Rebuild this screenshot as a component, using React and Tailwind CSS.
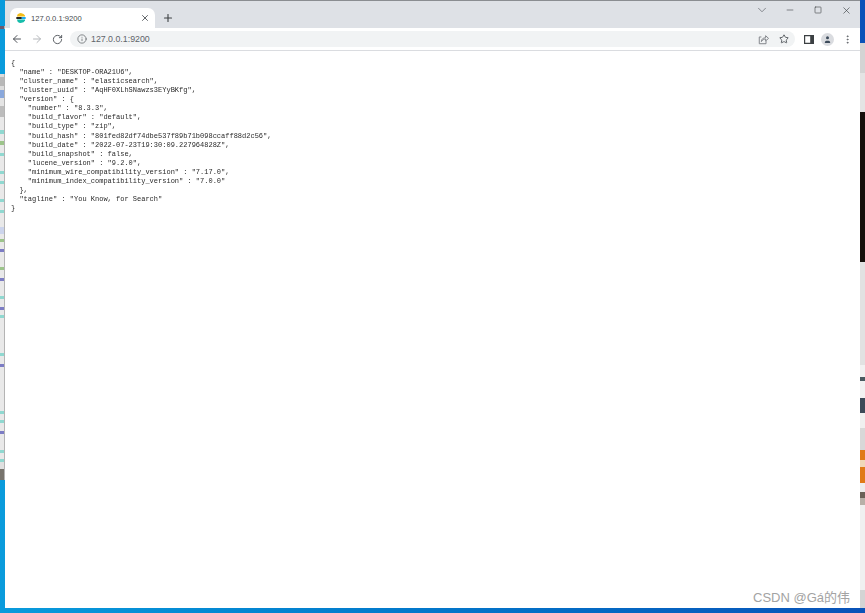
import { ArrowLeft, ArrowRight, RotateCw, Info, Plus, X, ChevronDown, Minus, Square, Star, EllipsisVertical, User } from "lucide-react";

const json = `{
  "name" : "DESKTOP-ORA21U6",
  "cluster_name" : "elasticsearch",
  "cluster_uuid" : "AqHF0XLhSNawzs3EYyBKfg",
  "version" : {
    "number" : "8.3.3",
    "build_flavor" : "default",
    "build_type" : "zip",
    "build_hash" : "801fed82df74dbe537f89b71b098ccaff88d2c56",
    "build_date" : "2022-07-23T19:30:09.227964828Z",
    "build_snapshot" : false,
    "lucene_version" : "9.2.0",
    "minimum_wire_compatibility_version" : "7.17.0",
    "minimum_index_compatibility_version" : "7.0.0"
  },
  "tagline" : "You Know, for Search"
}`;

const paper = "#e9e9e9";
const teal = "#8fd8d0";
const green = "#9cc48a";
const navy = "#7c7cc4";

// slices of the windows behind the browser: [height, colour]
const leftBits = [
  [26, "transparent"], [3, "#6a5a70"], [45, "transparent"],
  [3, "#dcdcdc"], [9, "#b8b8b8"], [4, "#dddddd"], [8, "#8aa8dc"], [8, "#e4e4e4"], [11, "#bcbcbc"],
  [13, paper], [4, teal], [7, paper], [4, green], [8, paper], [3, teal], [15, paper],
  [3, teal], [7, paper], [3, teal], [15, paper], [3, teal], [8, paper], [3, teal], [14, paper],
  [7, "#ccd4ec"], [5, paper], [3, green], [7, paper], [3, navy], [15, paper], [3, green], [8, paper],
  [3, navy], [15, paper], [3, teal], [8, paper], [3, navy], [5, paper], [3, teal], [35, paper],
  [3, teal], [8, paper], [3, navy], [44, paper], [3, teal], [6, paper], [3, teal], [8, paper],
  [3, navy], [16, paper], [3, teal], [6, paper], [3, teal], [7, "#e0e0e0"], [11, "#77736c"],
  [128, "transparent"],
];

const rightBits = [
  [43, "transparent"], [30, "#d4d4d4"], [39, "#e4e4e4"], [150, "#15100c"], [103, "#e2e2e2"],
  [12, "#f2f2f2"], [4, "#4a5a60"], [17, "#f2f2f2"], [15, "#3c4a58"], [15, "#f0f0f0"], [22, "#d8d8d8"],
  [10, "#e07a18"], [7, "#f0d8b8"], [16, "#e07a18"], [9, "#eeeeee"], [6, "#6b6258"], [7, "#b8b0a8"],
  [85, "#f0f0f0"], [18, "#d4d4d4"], [5, "transparent"],
];

function Favicon() {
  return (
    <svg width="10" height="10" viewBox="0 0 10 10" className="shrink-0">
      <path d="M1.5 1.6 A4.6 4.6 0 0 1 9 2.6 L9 3.4 L1 3.4 Z" fill="#f4bd19" />
      <path d="M0.4 3.9 H5 A1.1 1.1 0 0 1 5 6.1 H0.4 A5 5 0 0 1 0.4 3.9 Z" fill="#222222" />
      <path d="M5.6 3.9 H9.6 A5 5 0 0 1 9.6 6.1 H5.6 A2 2 0 0 0 5.6 3.9 Z" fill="#1ba9f5" />
      <path d="M1 6.6 H9 V7.4 A4.6 4.6 0 0 1 1.5 8.4 Z" fill="#16bdab" />
    </svg>
  );
}

function ShareIcon() {
  return (
    <svg width="11" height="11" viewBox="0 0 13 13" fill="none" stroke="#7d8085" strokeWidth="1.1">
      <path d="M4 3.5 H1.5 V11.5 H9.5 V8" />
      <path d="M4 9 C4 6 6 4.5 9 4.5 V2 L12.5 5.2 L9 8.2 V6 C7 6 5.2 7 4 9 Z" />
    </svg>
  );
}

function SidePanelIcon() {
  return (
    <svg width="10" height="9" viewBox="0 0 10 9">
      <path d="M0 0 H10 V9 H0 Z M1.2 1.2 V7.8 H6.2 V1.2 Z" fill="#3c4043" fillRule="evenodd" />
    </svg>
  );
}

function Strip({ bits, edge }) {
  return (
    <div className="flex w-[5px] shrink-0 flex-col">
      {bits.map(([h, c], i) => (
        <div
          key={i}
          className={edge && c !== "transparent" ? "border-r border-r-[#b4b4b4]" : ""}
          style={{ height: h, background: c }}
        />
      ))}
    </div>
  );
}

export default function App() {
  return (
    <div className="flex h-[613px] w-[865px] overflow-hidden bg-linear-to-r from-[#0a9bdc] to-[#0a52b8] font-['Liberation_Sans',sans-serif]">
      <Strip bits={leftBits} edge />

      <div className="flex h-[608px] w-[855px] shrink-0 flex-col border-t border-t-[#8a8d91] bg-white">
        {/* tab strip */}
        <div className="flex h-[27px] items-end bg-[#dee1e6]">
          <div className="ml-[5px] flex h-[20px] w-[145px] items-center rounded-t-[7px] bg-white pl-[6px] pr-[5px]">
            <Favicon />
            <span className="ml-[5px] flex-1 pt-[2px] text-[7.6px] text-[#45494e]">127.0.0.1:9200</span>
            <X size={10} strokeWidth={2} color="#45494e" />
          </div>
          <Plus size={12} strokeWidth={2.2} color="#3c4043" className="mb-[4px] ml-[7px]" />
          <div className="flex-1" />
          <div className="mb-[9px] flex h-[18px] items-center">
            <div className="flex w-[28px] justify-center">
              <ChevronDown size={14} strokeWidth={1.2} color="#5f6368" />
            </div>
            <div className="flex w-[28px] justify-center">
              <Minus size={10} strokeWidth={1.4} color="#3c4043" />
            </div>
            <div className="flex w-[28px] justify-center">
              <Square size={8} strokeWidth={1.8} color="#3c4043" />
            </div>
            <div className="flex w-[28px] justify-center">
              <X size={11} strokeWidth={1.4} color="#3c4043" />
            </div>
          </div>
        </div>

        {/* toolbar */}
        <div className="flex h-[23px] items-center border-b border-b-[#dadce0] bg-white pl-[6px]">
          <ArrowLeft size={12} strokeWidth={2} color="#50545a" />
          <ArrowRight size={12} strokeWidth={2} color="#b4b7bb" className="ml-[8px]" />
          <RotateCw size={11} strokeWidth={2} color="#50545a" className="ml-[9px]" />
          <div className="ml-[7px] flex h-[16px] w-[725px] items-center rounded-full bg-[#f1f3f4] pl-[7px] pr-[6px]">
            <Info size={10} strokeWidth={1.8} color="#5f6368" />
            <span className="ml-[4px] flex-1 pt-[2px] text-[8.8px] text-[#60646a]">127.0.0.1:9200</span>
            <ShareIcon />
            <Star size={10} strokeWidth={2} color="#45494e" className="ml-[10px]" />
          </div>
          <div className="ml-[9px] flex">
            <SidePanelIcon />
          </div>
          <div className="ml-[7px] flex h-[13px] w-[13px] items-center justify-center rounded-full bg-[#dadce0]">
            <User size={9} strokeWidth={0} fill="#3c4a5a" />
          </div>
          <EllipsisVertical size={11} strokeWidth={2} color="#5f6368" className="ml-[8px]" />
        </div>

        {/* page body */}
        <div className="relative flex-1 bg-white pl-[6px] pt-[8px]">
          <pre className="font-['Liberation_Mono',monospace] text-[7px] leading-[9.06px] text-[#2a2a2a] blur-[0.25px]">
            {json}
          </pre>
          <span className="absolute bottom-[2px] right-[10px] font-['Liberation_Sans','Noto_Sans_CJK_SC',sans-serif] text-[13px] leading-[16px] text-[#a3a3a3]">
            CSDN @Gá的伟
          </span>
        </div>
      </div>

      <Strip bits={rightBits} />
    </div>
  );
}
